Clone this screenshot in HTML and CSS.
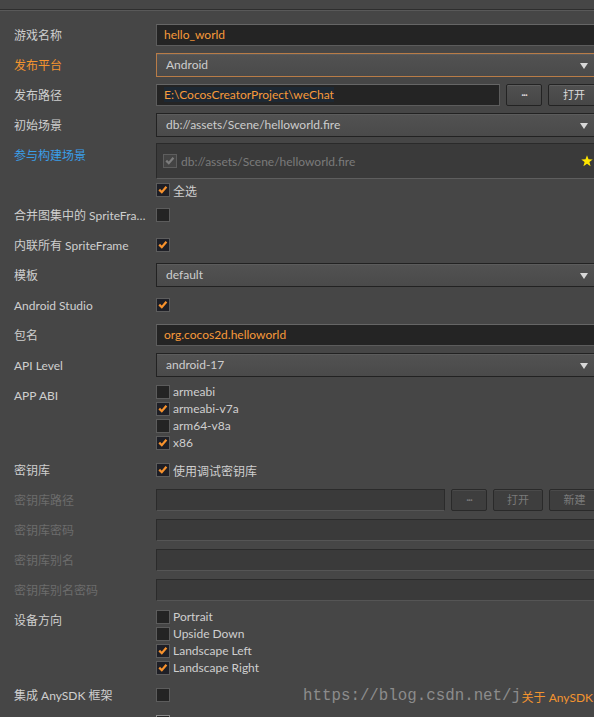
FILE: index.html
```html
<!DOCTYPE html>
<html lang="zh-CN">
<head>
<meta charset="utf-8">
<title>构建发布</title>
<link rel="stylesheet" href="styles.css">
</head>
<body>
<div class="panel">
  <div class="topline"></div>
  <div class="rows">
    <div class="row">
      <div class="label">游戏名称</div>
      <div class="field"><div class="input">hello_world</div></div>
    </div>
    <div class="row">
      <div class="label label-orange">发布平台</div>
      <div class="field"><div class="select select-focus"><span>Android</span><span class="arrow"></span></div></div>
    </div>
    <div class="row">
      <div class="label">发布路径</div>
      <div class="field field-inline">
        <div class="input input-grow"><span class="sel">E:\CocosCreatorProject\weChat</span></div>
        <div class="btn btn-dots">···</div>
        <div class="btn btn-open">打开</div>
      </div>
    </div>
    <div class="row">
      <div class="label">初始场景</div>
      <div class="field"><div class="select"><span>db://assets/Scene/helloworld.fire</span><span class="arrow"></span></div></div>
    </div>
    <div class="row row-top">
      <div class="label label-blue">参与构建场景</div>
      <div class="field">
        <div class="scene-box">
          <span class="cb cb-disabled"><svg viewBox="0 0 14 14"><path d="M2.6 6.6 L5.6 9.6 L11 3.2"/></svg></span>
          <span class="scene-text">db://assets/Scene/helloworld.fire</span>
          <svg class="star" viewBox="0 0 12 12"><polygon points="6,0.3 7.5,4.2 11.7,4.4 8.4,7 9.6,11.2 6,8.8 2.4,11.2 3.6,7 0.3,4.4 4.5,4.2"/></svg>
        </div>
      </div>
    </div>
    <div class="row row-short">
      <div class="label"></div>
      <div class="field"><label class="check"><span class="cb cb-on"><svg viewBox="0 0 14 14"><path d="M2.6 6.6 L5.6 9.6 L11 3.2"/></svg></span><span>全选</span></label></div>
    </div>
    <div class="row">
      <div class="label">合并图集中的 SpriteFrame</div>
      <div class="field"><span class="cb"></span></div>
    </div>
    <div class="row">
      <div class="label">内联所有 SpriteFrame</div>
      <div class="field"><span class="cb cb-on"><svg viewBox="0 0 14 14"><path d="M2.6 6.6 L5.6 9.6 L11 3.2"/></svg></span></div>
    </div>
    <div class="row">
      <div class="label">模板</div>
      <div class="field"><div class="select"><span>default</span><span class="arrow"></span></div></div>
    </div>
    <div class="row">
      <div class="label">Android Studio</div>
      <div class="field"><span class="cb cb-on"><svg viewBox="0 0 14 14"><path d="M2.6 6.6 L5.6 9.6 L11 3.2"/></svg></span></div>
    </div>
    <div class="row">
      <div class="label">包名</div>
      <div class="field"><div class="input">org.cocos2d.helloworld</div></div>
    </div>
    <div class="row">
      <div class="label">API Level</div>
      <div class="field"><div class="select"><span>android-17</span><span class="arrow"></span></div></div>
    </div>
    <div class="row row-top">
      <div class="label">APP ABI</div>
      <div class="field check-list">
        <label class="check"><span class="cb"></span><span>armeabi</span></label>
        <label class="check"><span class="cb cb-on"><svg viewBox="0 0 14 14"><path d="M2.6 6.6 L5.6 9.6 L11 3.2"/></svg></span><span>armeabi-v7a</span></label>
        <label class="check"><span class="cb"></span><span>arm64-v8a</span></label>
        <label class="check"><span class="cb cb-on"><svg viewBox="0 0 14 14"><path d="M2.6 6.6 L5.6 9.6 L11 3.2"/></svg></span><span>x86</span></label>
      </div>
    </div>
    <div class="row">
      <div class="label">密钥库</div>
      <div class="field"><label class="check"><span class="cb cb-on"><svg viewBox="0 0 14 14"><path d="M2.6 6.6 L5.6 9.6 L11 3.2"/></svg></span><span>使用调试密钥库</span></label></div>
    </div>
    <div class="row">
      <div class="label label-disabled">密钥库路径</div>
      <div class="field field-inline">
        <div class="input input-disabled input-grow"></div>
        <div class="btn btn-disabled btn-dots">···</div>
        <div class="btn btn-disabled btn-open2">打开</div>
        <div class="btn btn-disabled btn-new">新建</div>
      </div>
    </div>
    <div class="row">
      <div class="label label-disabled">密钥库密码</div>
      <div class="field"><div class="input input-disabled"></div></div>
    </div>
    <div class="row">
      <div class="label label-disabled">密钥库别名</div>
      <div class="field"><div class="input input-disabled"></div></div>
    </div>
    <div class="row">
      <div class="label label-disabled">密钥库别名密码</div>
      <div class="field"><div class="input input-disabled"></div></div>
    </div>
    <div class="row row-top">
      <div class="label">设备方向</div>
      <div class="field check-list">
        <label class="check"><span class="cb"></span><span>Portrait</span></label>
        <label class="check"><span class="cb"></span><span>Upside Down</span></label>
        <label class="check"><span class="cb cb-on"><svg viewBox="0 0 14 14"><path d="M2.6 6.6 L5.6 9.6 L11 3.2"/></svg></span><span>Landscape Left</span></label>
        <label class="check"><span class="cb cb-on"><svg viewBox="0 0 14 14"><path d="M2.6 6.6 L5.6 9.6 L11 3.2"/></svg></span><span>Landscape Right</span></label>
      </div>
    </div>
    <div class="row">
      <div class="label">集成 AnySDK 框架</div>
      <div class="field field-inline"><span class="cb"></span><span class="link">关于 AnySDK</span></div>
    </div>
    <div class="row row-top">
      <div class="label"></div>
      <div class="field field-last"><span class="cb cb-light"></span></div>
    </div>
  </div>
  <div class="watermark">https://blog.csdn.net/j</div>
</div>
</body>
</html>
```

FILE: styles.css
```css
* { box-sizing: border-box; }
html, body {
  margin: 0;
  padding: 0;
  overflow: hidden;
  background: #464646;
}
body {
  width: 594px;
  height: 717px;
  font-family: Lato, "Noto Sans CJK SC", sans-serif;
  font-size: 12px;
  color: #cfcfcf;
}
.panel {
  position: relative;
  width: 600px;
}
.topline {
  height: 10px;
  border-bottom: 1px solid #2e2e2e;
  box-shadow: 0 1px 0 #595959;
}
.rows {
  padding-top: 10px;
}
.row {
  display: grid;
  grid-template-columns: 156px 444px;
  min-height: 30px;
  align-items: center;
}
.row-top { align-items: start; }
.row-short { min-height: 20px; }
.label {
  padding-left: 14px;
  padding-right: 8px;
  padding-top: 2px;
  line-height: 28px;
  white-space: nowrap;
  overflow: hidden;
  text-overflow: ellipsis;
}
.label-orange { color: #f3942f; }
.label-blue { color: #3a9ee8; }
.label-disabled { color: #6c6c6c; }
.field {
  display: flex;
  align-items: center;
  min-width: 0;
}
.field-inline { gap: 6px; }
.input {
  flex: 1;
  height: 22px;
  line-height: 20px;
  padding-left: 7px;
  background: #242424;
  border: 1px solid #5c5c5c;
  border-top-color: #666;
  color: #f79a3a;
  white-space: nowrap;
  overflow: hidden;
}
.input-grow { min-width: 0; }
.sel { background: #1d2833; }
.input-disabled {
  background: #3a3a3a;
  border-color: #2b2b2b;
  border-bottom-color: #555;
}
.select {
  flex: 1;
  position: relative;
  height: 24px;
  line-height: 22px;
  padding-left: 9px;
  background: linear-gradient(#525252, #4a4a4a);
  border: 1px solid #222;
  box-shadow: inset 0 1px 0 #5c5c5c;
  color: #cdcdcd;
}
.select-focus {
  border-color: #b97c47;
}
.arrow {
  position: absolute;
  right: 11px;
  top: 9px;
  width: 0;
  height: 0;
  border-left: 4px solid transparent;
  border-right: 4px solid transparent;
  border-top: 6px solid #d8d8d8;
}
.btn {
  flex: none;
  height: 22px;
  line-height: 20px;
  text-align: center;
  font-size: 11px;
  color: #dcdcdc;
  background: linear-gradient(#505050, #464646);
  border: 1px solid #232323;
  box-shadow: inset 0 1px 0 #5e5e5e;
  border-radius: 2px;
}
.btn-dots { width: 36px; letter-spacing: -1px; }
.btn-open { width: 52px; }
.btn-open2 { width: 50px; }
.btn-new { width: 51px; }
.btn-disabled {
  color: #7a7a7a;
  background: #3e3e3e;
  border-color: #2a2a2a;
  box-shadow: inset 0 1px 0 #4a4a4a;
}
.scene-box {
  flex: 1;
  height: 36px;
  margin: 3px 0 1px;
  display: flex;
  align-items: center;
  padding-left: 6px;
  background: #3a3a3a;
  border: 1px solid #2a2a2a;
  border-bottom-color: #5e5e5e;
}
.scene-text {
  margin-left: 4px;
  color: #7a7a7a;
}
.star {
  width: 12px;
  height: 12px;
  margin-left: auto;
  margin-right: 6px;
}
.star polygon { fill: #ffe600; }
.cb {
  flex: none;
  display: inline-block;
  width: 14px;
  height: 14px;
  background: #242424;
  border: 1px solid #5c5c5c;
}
.cb svg {
  display: block;
  width: 12px;
  height: 12px;
}
.cb path {
  fill: none;
  stroke: #f7922d;
  stroke-width: 2.6;
}
.cb-on { background: #1e1f26; }
.cb-disabled {
  background: #444;
  border-color: #5e5e5e;
}
.cb-disabled path { stroke: #7c7c7c; }
.cb-light { border-color: #8a8a8a; margin-top: 5px; }
.check {
  display: flex;
  align-items: center;
  gap: 3px;
  height: 17px;
}
.check-list {
  flex-direction: column;
  align-items: flex-start;
  padding: 3px 0 4px;
}
.link {
  margin-left: auto;
  margin-right: 7px;
  margin-top: 3px;
  color: #f3942f;
  position: relative;
  z-index: 2;
}
.field-last { align-items: flex-start; }
.watermark {
  position: absolute;
  left: 303px;
  top: 686px;
  font-family: "Liberation Mono", monospace;
  font-size: 15.8px;
  line-height: 20px;
  color: #8c8c8c;
  z-index: 1;
}
```
